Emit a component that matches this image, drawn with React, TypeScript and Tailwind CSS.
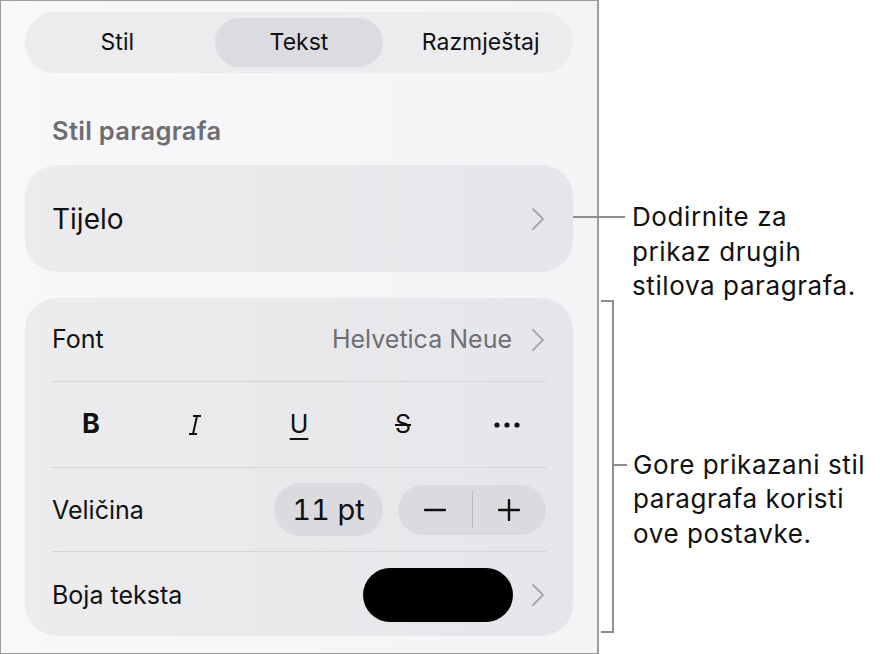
import React from "react";

const Chevron = () => (
  <svg width="14" height="24" viewBox="0 0 14 24" className="shrink-0">
    <polyline points="2,2 12,12 2,22" fill="none" stroke="#a5a5aa" strokeWidth="1.8" strokeLinecap="round" strokeLinejoin="round" />
  </svg>
);

const Sep = () => <div className="h-px bg-[#d6d6d9]" />;

export default function App() {
  return (
    <div className="flex w-[880px] h-[654px] bg-white overflow-hidden" style={{ fontFamily: "Inter, 'Noto Sans', sans-serif" }}>
      {/* Panel */}
      <div className="w-[599px] h-[654px] shrink-0 border border-r-2 border-[#9c9c9c] bg-linear-to-r from-[#f8f8fa] to-[#f4f4f6] px-6 flex flex-col">
        {/* Segmented control */}
        <div className="mt-[11px] h-[61px] rounded-full bg-[#ececef] grid grid-cols-3 items-center px-[6px] text-[23px] text-[#111]">
          <div className="text-center pr-[6px]">Stil</div>
          <div className="mx-auto w-[168px] h-[49px] rounded-full bg-[#dcdce0] flex items-center justify-center">Tekst</div>
          <div className="text-center pl-[6px]">Razmještaj</div>
        </div>

        {/* Heading */}
        <div className="mt-[34px] h-[48px] flex items-center pl-[27px] text-[25.5px] tracking-[0.3px] font-semibold text-[#6d6d72]">
          Stil paragrafa
        </div>

        {/* Tijelo card */}
        <div className="mt-[10px] h-[107px] rounded-[32px] bg-linear-to-r from-[#ececee] to-[#e6e6ea] flex items-center justify-between pl-[27px] pr-[28px]">
          <span className="text-[28px] text-[#111]">Tijelo</span>
          <Chevron />
        </div>

        {/* Settings card */}
        <div className="mt-[26px] h-[338px] rounded-[32px] bg-linear-to-r from-[#ececee] to-[#e6e6ea] px-[26px] flex flex-col text-[25px] text-[#111]">
          <div className="h-[83px] flex items-center justify-between pl-px">
            <span>Font</span>
            <div className="flex items-center gap-[19px] pr-[2px]">
              <span className="text-[#6e6e73]">Helvetica Neue</span>
              <Chevron />
            </div>
          </div>
          <Sep />
          <div className="h-[85px] flex items-center justify-between">
            <div className="w-[80px] flex justify-center text-[27px] font-bold">B</div>
            <div className="w-[80px] flex justify-center">
              <svg width="18" height="22" viewBox="0 0 18 22">
                <line x1="11" y1="2" x2="7" y2="20" stroke="#111" strokeWidth="2" />
                <line x1="7" y1="2" x2="15" y2="2" stroke="#111" strokeWidth="2" />
                <line x1="3" y1="20" x2="11" y2="20" stroke="#111" strokeWidth="2" />
              </svg>
            </div>
            <div className="w-[80px] flex justify-center">
              <span className="underline underline-offset-[5px] decoration-2">U</span>
            </div>
            <div className="w-[80px] flex justify-center">
              <span className="line-through decoration-2">S</span>
            </div>
            <div className="w-[80px] flex justify-center">
              <svg width="26" height="6" viewBox="0 0 26 6">
                <circle cx="3" cy="3" r="2.6" fill="#111" />
                <circle cx="13" cy="3" r="2.6" fill="#111" />
                <circle cx="23" cy="3" r="2.6" fill="#111" />
              </svg>
            </div>
          </div>
          <Sep />
          <div className="h-[83px] flex items-center justify-between pl-px">
            <span className="pt-[2px]">Veličina</span>
            <div className="flex items-center gap-[15px] pr-px">
              <div className="w-[109px] h-[53px] rounded-full bg-[#dbdbdf] flex items-center justify-center text-[29px] tabular-nums">11 pt</div>
              <div className="w-[148px] h-[50px] rounded-full bg-[#dbdbdf] flex items-center">
                <div className="flex-1 flex justify-center">
                  <svg width="22" height="4" viewBox="0 0 22 4">
                    <line x1="1" y1="2" x2="21" y2="2" stroke="#111" strokeWidth="2.4" strokeLinecap="round" />
                  </svg>
                </div>
                <div className="w-px h-[37px] bg-[#b9b9bd]" />
                <div className="flex-1 flex justify-center">
                  <svg width="22" height="22" viewBox="0 0 22 22">
                    <line x1="1" y1="11" x2="21" y2="11" stroke="#111" strokeWidth="2.4" strokeLinecap="round" />
                    <line x1="11" y1="1" x2="11" y2="21" stroke="#111" strokeWidth="2.4" strokeLinecap="round" />
                  </svg>
                </div>
              </div>
            </div>
          </div>
          <Sep />
          <div className="h-[84px] flex items-center justify-between pl-px pt-[2px]">
            <span className="pt-[2px]">Boja teksta</span>
            <div className="flex items-center gap-[18px] pr-[2px]">
              <div className="w-[150px] h-[54px] rounded-full bg-black" />
              <Chevron />
            </div>
          </div>
        </div>
      </div>

      {/* Callouts */}
      <div className="flex-1 flex flex-col text-[26px] leading-[34.5px] text-[#111] tracking-[0.6px]">
        <div className="mt-[200px] flex items-start">
          <div className="ml-[-26px] mt-[16px] w-[52px] h-[2px] bg-[#8e8e8e] shrink-0" />
          <div className="ml-[7px] whitespace-nowrap">
            Dodirnite za<br />prikaz drugih<br />stilova paragrafa.
          </div>
        </div>
        <div className="mt-[-4px] flex items-start">
          <div className="ml-[2px] w-[13px] h-[333px] border-y-2 border-r-2 border-[#8e8e8e] shrink-0" />
          <div className="mt-[164px] w-[13px] h-[2px] bg-[#8e8e8e] shrink-0" />
          <div className="ml-[6px] mt-[148px] whitespace-nowrap">
            Gore prikazani stil<br />paragrafa koristi<br />ove postavke.
          </div>
        </div>
      </div>
    </div>
  );
}
